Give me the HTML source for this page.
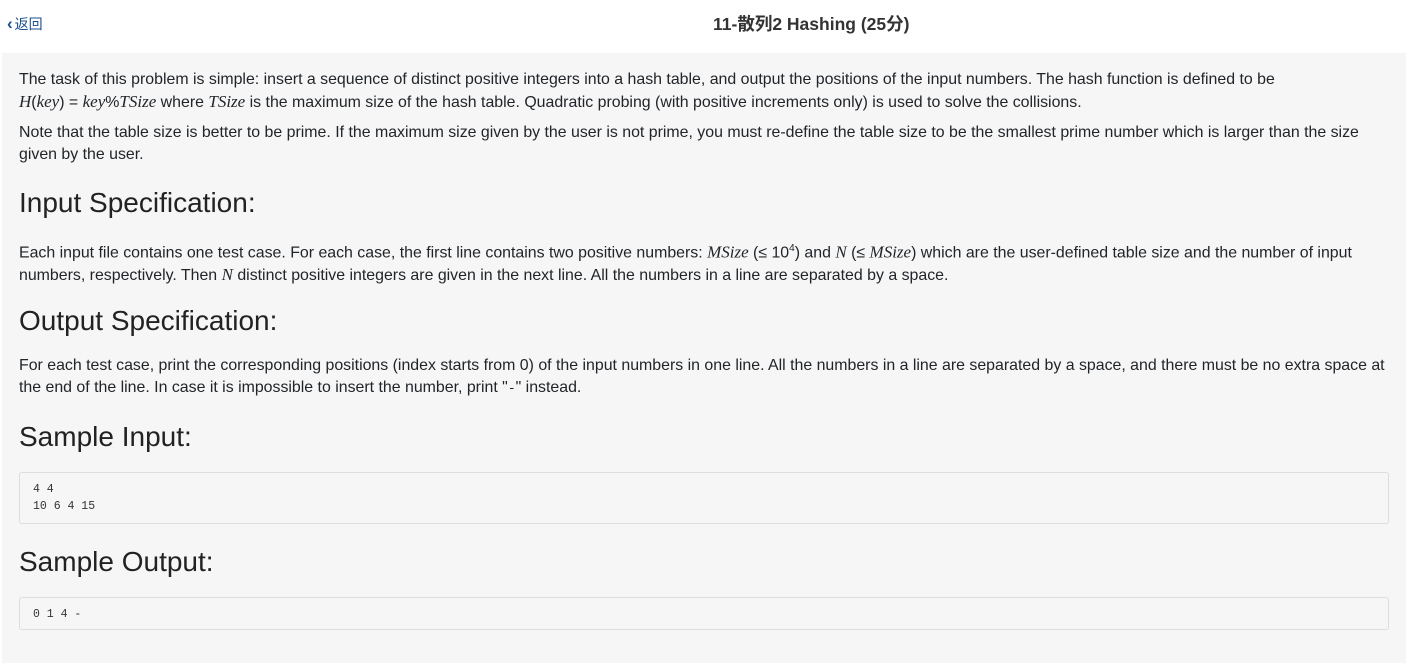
<!DOCTYPE html>
<html><head><meta charset="utf-8"><style>
body{margin:0;width:1408px;height:670px;background:#fff;font-family:"Liberation Sans","Noto Sans CJK SC",sans-serif;color:#212529;position:relative;overflow:hidden}
.back{position:absolute;left:7px;top:14px;font-size:14px;color:#1a4f8f;line-height:20px}
.back b{font-size:17px;font-weight:bold;margin-right:2px}
.title{position:absolute;left:713px;top:13px;font-weight:bold;font-size:17.5px;color:#333;line-height:22px;white-space:nowrap}
.panel{position:absolute;left:2px;top:53px;width:1404px;height:610px;background:#f6f6f6}
.t{position:absolute;left:19px;font-size:15.9px;line-height:22px;white-space:nowrap}
.h{position:absolute;left:19px;font-size:28px;line-height:34px;white-space:nowrap;color:#222}
i.m{font-family:"Liberation Serif",serif;font-size:17px}
.box{position:absolute;left:19px;width:1370px;border:1px solid #ddd;border-radius:3px;background:#f6f6f6;font-family:"Liberation Mono",monospace;font-size:11.5px;line-height:17px;padding:0 0 0 13px;box-sizing:border-box;color:#333}
</style></head><body>
<div class="back"><b>&#8249;</b>返回</div>
<div class="title">11-散列2 Hashing (25分)</div>
<div class="panel"></div>
<div class="t" style="top:69px">The task of this problem is simple: insert a sequence of distinct positive integers into a hash table, and output the positions of the input numbers. The hash function is defined to be<br><i class="m">H</i>(<i class="m">key</i>) = <i class="m">key</i>%<i class="m">TSize</i> where <i class="m">TSize</i> is the maximum size of the hash table. Quadratic probing (with positive increments only) is used to solve the collisions.</div>
<div class="t" style="top:122px">Note that the table size is better to be prime. If the maximum size given by the user is not prime, you must re-define the table size to be the smallest prime number which is larger than the size<br>given by the user.</div>
<div class="h" style="top:186px">Input Specification:</div>
<div class="t" style="top:238px">Each input file contains one test case. For each case, the first line contains two positive numbers: <i class="m">MSize</i> (≤ 10<sup style="font-size:10px">4</sup>) and <i class="m">N</i> (≤ <i class="m">MSize</i>) which are the user-defined table size and the number of input<br>numbers, respectively. Then <i class="m">N</i> distinct positive integers are given in the next line. All the numbers in a line are separated by a space.</div>
<div class="h" style="top:304px">Output Specification:</div>
<div class="t" style="top:355px">For each test case, print the corresponding positions (index starts from 0) of the input numbers in one line. All the numbers in a line are separated by a space, and there must be no extra space at<br>the end of the line. In case it is impossible to insert the number, print "<span style="font-family:'Liberation Mono',monospace;font-size:13px">-</span>" instead.</div>
<div class="h" style="top:420px">Sample Input:</div>
<div class="box" style="top:472px;height:52px;padding-top:8px">4 4<br>10 6 4 15</div>
<div class="h" style="top:545px">Sample Output:</div>
<div class="box" style="top:597px;height:33px;padding-top:8px">0 1 4 -</div>
</body></html>
